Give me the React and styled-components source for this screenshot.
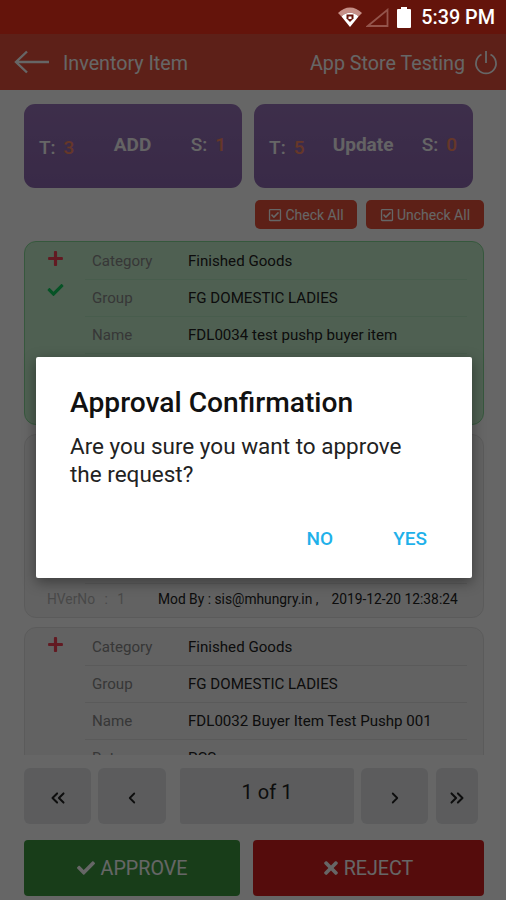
import styled, { createGlobalStyle } from "styled-components";
import { FaCheck, FaPlus, FaRegCheckSquare, FaTimes } from "react-icons/fa";
import {
  ChevronLeft,
  ChevronRight,
  ChevronsLeft,
  ChevronsRight,
} from "lucide-react";

const GlobalStyle = createGlobalStyle`
  html, body {
    margin: 0;
    padding: 0;
    background: #fff;
    font-family: Roboto, "Liberation Sans", sans-serif;
  }
  * { box-sizing: border-box; }
`;

const Screen = styled.div`
  position: relative;
  width: 506px;
  height: 900px;
  overflow: hidden;
  display: flex;
  flex-direction: column;
  background: #fff;
`;

const StatusBar = styled.div`
  position: relative;
  z-index: 3;
  height: 34px;
  flex: none;
  display: flex;
  align-items: center;
  justify-content: flex-end;
  padding-right: 11px;
  background: #64140b;
  color: #fff;
  font-size: 19.8px;
  font-weight: 500;
`;

const StatusIcons = styled.div`
  display: flex;
  align-items: center;
  margin-right: 10px;
`;

const SignalSlot = styled.div`
  display: flex;
  margin: 0 8px 0 4px;
`;

const AppBar = styled.div`
  height: 56px;
  flex: none;
  display: flex;
  align-items: center;
  padding: 0 8px 0 14px;
  background: #e8503c;
  color: #fff;
  font-size: 19.7px;
`;

const AppTitle = styled.div`
  margin: 2px 0 0 14px;
  flex: 1;
`;

const AppUser = styled.div`
  margin: 2px 9px 0 0;
`;

const Content = styled.div`
  flex: 1;
  min-height: 0;
  overflow: hidden;
  padding: 14px 22px 0 24px;
`;

const Tiles = styled.div`
  display: flex;
  gap: 12px;
  padding-right: 11px;
`;

const Tile = styled.div`
  flex: ${(p) => p.$grow};
  height: 84px;
  padding: 0 16px 3px 15px;
  display: flex;
  align-items: center;
  justify-content: space-between;
  border-radius: 11px;
  background: linear-gradient(#9a74bb, #8f69b2);
  color: #fff;
  font-size: 19px;
  font-weight: 500;
`;

const TileCount = styled.span`
  font-size: 19px;
  transform: translateY(${(p) => p.$drop}px);
`;

const TileValue = styled.span`
  color: #ff8a65;
  margin-left: 8px;
`;

const TileName = styled.span`
  font-weight: 700;
  opacity: 0.95;
`;

const BulkRow = styled.div`
  display: flex;
  justify-content: flex-end;
  gap: 9px;
  margin-top: 12px;
`;

const BulkButton = styled.div`
  width: ${(p) => p.$width}px;
  height: 29px;
  display: flex;
  align-items: center;
  justify-content: center;
  gap: 3px;
  border-radius: 5px;
  background: #e9503a;
  color: #fff;
  font-size: 14px;

  svg {
    width: 14px;
    height: 14px;
  }
`;

const Card = styled.div`
  height: 184px;
  margin-top: ${(p) => p.$top}px;
  padding: 1px 16px 0 60px;
  border: 1px solid ${(p) => (p.$approved ? "#88dd99" : "#e4e4e4")};
  border-radius: 12px;
  background: ${(p) => (p.$approved ? "#c6f0cd" : "#f5f5f5")};
  position: relative;
`;

const CardMarks = styled.div`
  position: absolute;
  left: 21px;
  top: 8px;
  width: 18px;
  display: flex;
  flex-direction: column;
  align-items: center;
  gap: 15px;
`;

const PlusMark = styled(FaPlus)`
  width: 17px;
  height: 17px;
  color: #f44356;
`;

const CheckMark = styled(FaCheck)`
  width: 19px;
  height: 16px;
  color: #0fcf5e;
`;

const Row = styled.div`
  height: 37px;
  display: flex;
  align-items: center;
  border-bottom: 1px solid ${(p) => (p.$approved ? "#b5e8c0" : "#e2e2e2")};
  font-size: 15.1px;
  color: #222;
`;

const RowLabel = styled.div`
  width: 103px;
  padding-left: 7px;
  color: #8a8a8a;
`;

const CardFooter = styled.div`
  position: absolute;
  left: 22px;
  right: 10px;
  bottom: 10px;
  display: flex;
  font-size: 13.8px;
  color: #222;
  white-space: nowrap;
`;

const FooterVersion = styled.div`
  width: 111px;
  color: #b5b5b5;
  word-spacing: 6px;
`;

const FooterDate = styled.span`
  margin-left: 13px;
`;

const Pager = styled.div`
  height: 85px;
  flex: none;
  padding: 13px 0 0 24px;
  display: flex;
  gap: 7px;
`;

const PageButton = styled.div`
  width: ${(p) => p.$width}px;
  height: 56px;
  margin: ${(p) => p.$margin || "0"};
  padding-top: 3px;
  display: flex;
  align-items: center;
  justify-content: center;
  border-radius: 6px;
  background: #e5e7e9;
  color: #222;
`;

const PageLabel = styled(PageButton)`
  padding: 0 0 8px;
  font-size: 20px;
  border-radius: 3px;
`;

const Actions = styled.div`
  height: 60px;
  flex: none;
  padding: 0 22px 0 24px;
  display: flex;
  gap: 13px;
`;

const ActionButton = styled.div`
  flex: ${(p) => p.$grow};
  height: 56px;
  display: flex;
  align-items: center;
  justify-content: center;
  gap: 6px;
  border-radius: 4px;
  background: ${(p) => p.$color};
  color: #fff;
  font-size: 19.7px;
`;

const ApproveIcon = styled(FaCheck)`
  width: 18px;
  height: 18px;
`;

const RejectIcon = styled(FaTimes)`
  width: 14px;
  height: 20px;
`;

const Overlay = styled.div`
  position: absolute;
  inset: 34px 0 0;
  z-index: 1;
  background: rgba(0, 0, 0, 0.6);
`;

const Dialog = styled.div`
  position: absolute;
  z-index: 2;
  left: 36px;
  top: 357px;
  width: 436px;
  height: 221px;
  padding: 30px 34px 0;
  border-radius: 2px;
  background: #fff;
  box-shadow: 0 4px 14px rgba(0, 0, 0, 0.4);
`;

const DialogTitle = styled.div`
  font-size: 28.2px;
  font-weight: 500;
  line-height: 32px;
  color: #111;
`;

const DialogText = styled.div`
  margin-top: 13px;
  font-size: 22.5px;
  line-height: 28px;
  color: #222;
`;

const DialogActions = styled.div`
  display: flex;
  justify-content: flex-end;
  gap: 60px;
  margin: 39px 11px 0 0;
`;

const DialogButton = styled.div`
  color: #1fb1ea;
  font-size: 19px;
  font-weight: 500;
  line-height: 24px;
`;

const WifiIcon = () => (
  <svg width="24" height="20" viewBox="0 0 24 20">
    <path d="M0 6 C7 -1.5 17 -1.5 24 6 L20.5 9.5 C15.5 4.5 8.5 4.5 3.5 9.5 Z" fill="#c58f87" />
    <path d="M3.5 9.5 C8.5 4.5 15.5 4.5 20.5 9.5 L12 20 Z" fill="#fff" />
    <path d="M8.5 7.5 h7 v4 l-3.5 3.5 l-3.5 -3.5 Z" fill="#64140b" />
    <rect x="10.5" y="9.5" width="3" height="2.5" fill="#fff" />
  </svg>
);

const SignalIcon = () => (
  <svg width="23" height="19" viewBox="0 0 23 19">
    <path d="M21.5 1.8 V18 H1.8 Z" fill="none" stroke="#94544b" strokeWidth="1.8" />
  </svg>
);

const BatteryIcon = () => (
  <svg width="14" height="21" viewBox="0 0 14 21">
    <path d="M4 0 h6 v2 h3 a1 1 0 0 1 1 1 V20 a1 1 0 0 1 -1 1 h-12 a1 1 0 0 1 -1 -1 V3 a1 1 0 0 1 1 -1 h3 Z" fill="#fff" />
  </svg>
);

const BackIcon = () => (
  <svg width="35" height="24" viewBox="0 0 35 24" fill="none" stroke="#fff" strokeWidth="2.4">
    <path d="M35 12 H2" />
    <path d="M13 1.5 L2 12 L13 22.5" />
  </svg>
);

const PowerIcon = () => (
  <svg width="24" height="26" viewBox="0 0 24 26" fill="none" stroke="#fff" strokeWidth="1.8">
    <path d="M12 2 V14" />
    <path d="M7.5 5.5 A10 10 0 1 0 16.5 5.5" />
  </svg>
);

const Item = ({ name, approved, top, marks }) => (
  <Card $approved={approved} $top={top}>
    <CardMarks>{marks}</CardMarks>
    <Row $approved={approved}>
      <RowLabel>Category</RowLabel>
      Finished Goods
    </Row>
    <Row $approved={approved}>
      <RowLabel>Group</RowLabel>
      FG DOMESTIC LADIES
    </Row>
    <Row $approved={approved}>
      <RowLabel>Name</RowLabel>
      {name}
    </Row>
    <Row $approved={approved}>
      <RowLabel>Rate</RowLabel>
      PCS
    </Row>
    <CardFooter>
      <FooterVersion>HVerNo : 1</FooterVersion>
      <div>
        Mod By : sis@mhungry.in ,<FooterDate>2019-12-20 12:38:24</FooterDate>
      </div>
    </CardFooter>
  </Card>
);

const App = () => (
  <Screen>
    <GlobalStyle />
    <StatusBar>
      <StatusIcons>
        <WifiIcon />
        <SignalSlot>
          <SignalIcon />
        </SignalSlot>
        <BatteryIcon />
      </StatusIcons>
      5:39 PM
    </StatusBar>
    <AppBar>
      <BackIcon />
      <AppTitle>Inventory Item</AppTitle>
      <AppUser>App Store Testing</AppUser>
      <PowerIcon />
    </AppBar>
    <Content>
      <Tiles>
        <Tile $grow="218">
          <TileCount $drop={3}>
            T:<TileValue>3</TileValue>
          </TileCount>
          <TileName>ADD</TileName>
          <TileCount $drop={0}>
            S:<TileValue>1</TileValue>
          </TileCount>
        </Tile>
        <Tile $grow="219">
          <TileCount $drop={3}>
            T:<TileValue>5</TileValue>
          </TileCount>
          <TileName>Update</TileName>
          <TileCount $drop={0}>
            S:<TileValue>0</TileValue>
          </TileCount>
        </Tile>
      </Tiles>
      <BulkRow>
        <BulkButton $width={102}>
          <FaRegCheckSquare /> Check All
        </BulkButton>
        <BulkButton $width={118}>
          <FaRegCheckSquare /> Uncheck All
        </BulkButton>
      </BulkRow>
      <Item
        approved
        top={12}
        name="FDL0034 test pushp buyer item"
        marks={
          <>
            <PlusMark />
            <CheckMark />
          </>
        }
      />
      <Item top={9} name="FDL0033 test pushp buyer item" marks={<PlusMark />} />
      <Item top={9} name="FDL0032 Buyer Item Test Pushp 001" marks={<PlusMark />} />
    </Content>
    <Pager>
      <PageButton $width={67}>
        <ChevronsLeft size={22} strokeWidth={2.2} />
      </PageButton>
      <PageButton $width={68}>
        <ChevronLeft size={18} strokeWidth={2.4} />
      </PageButton>
      <PageLabel $width={174} $margin="0 0 0 7px">
        1 of 1
      </PageLabel>
      <PageButton $width={67}>
        <ChevronRight size={18} strokeWidth={2.4} />
      </PageButton>
      <PageButton $width={42} $margin="0 0 0 1px">
        <ChevronsRight size={22} strokeWidth={2.2} />
      </PageButton>
    </Pager>
    <Actions>
      <ActionButton $grow="216" $color="#3c9a40">
        <ApproveIcon /> APPROVE
      </ActionButton>
      <ActionButton $grow="231" $color="#d42020">
        <RejectIcon /> REJECT
      </ActionButton>
    </Actions>
    <Overlay />
    <Dialog>
      <DialogTitle>Approval Confirmation</DialogTitle>
      <DialogText>
        Are you sure you want to approve
        <br />
        the request?
      </DialogText>
      <DialogActions>
        <DialogButton>NO</DialogButton>
        <DialogButton>YES</DialogButton>
      </DialogActions>
    </Dialog>
  </Screen>
);

export default App;
